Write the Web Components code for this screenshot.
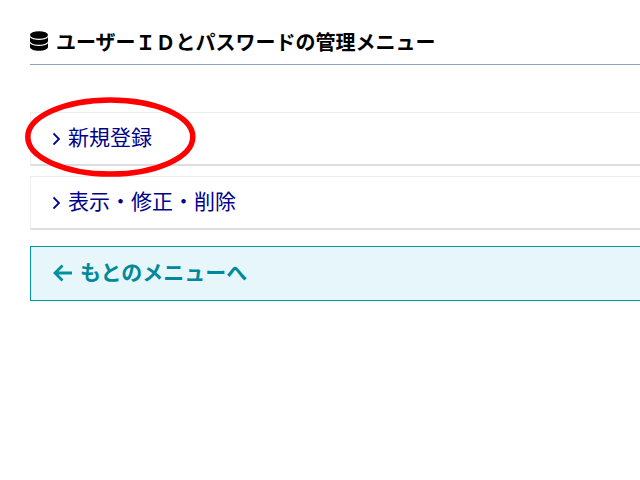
<!DOCTYPE html>
<html lang="ja">
<head>
<meta charset="utf-8">
<title>管理メニュー</title>
<style>
  html, body { margin: 0; background: #fff; overflow: hidden; }
  body { width: 640px; height: 480px; font-family: "Noto Sans CJK JP", "Liberation Sans", sans-serif; }
</style>
</head>
<body>
<admin-page>
  <page-title>ユーザーＩＤとパスワードの管理メニュー</page-title>
  <menu-link>新規登録</menu-link>
  <menu-link>表示・修正・削除</menu-link>
  <back-link>もとのメニューへ</back-link>
</admin-page>
<script>
class AdminPage extends HTMLElement {
  constructor() {
    super();
    this.attachShadow({mode: 'open'}).innerHTML = `
      <style>
        :host { display: block; position: relative; height: 480px; overflow: hidden; }
        .wrap { display: flex; flex-direction: column; padding: 26px 0 0 30px; width: 660px; }
        svg { position: absolute; left: 0; top: 0; }
      </style>
      <div class="wrap"><slot></slot></div>
      <svg width="640" height="480" viewBox="0 0 640 480">
        <ellipse cx="110.300" cy="137" rx="82.500" ry="37" fill="none" stroke="#f00" stroke-width="5.500"/>
      </svg>`;
  }
}
class PageTitle extends HTMLElement {
  constructor() {
    super();
    this.attachShadow({mode: 'open'}).innerHTML = `
      <style>
        :host { display: flex; align-items: center; gap: 8px; height: 30px; margin-bottom: 47px; margin-right: 20px;
          padding-bottom: 8px; border-bottom: 1px solid #8fa3bf; font-size: 20px; font-weight: 700; color: #000; line-height: 30px; }
        svg { width: 18px; height: 20px; flex: none; }
        span { margin-top: 1px; }
      </style>
      <svg viewBox="0 0 18 20">
        <ellipse cx="9" cy="4" rx="9" ry="3.800"/>
        <path d="M0 6.300C1.500 8.100 5 9 9 9s7.500-.9 9-2.700V10c0 2.100-4 3.800-9 3.800S0 12.100 0 10z"/>
        <path d="M0 12.300C1.500 14.100 5 15 9 15s7.500-.9 9-2.700V16c0 2.100-4 3.800-9 3.800S0 18.100 0 16z"/>
      </svg>
      <span><slot></slot></span>`;
  }
}
class MenuLink extends HTMLElement {
  constructor() {
    super();
    this.attachShadow({mode: 'open'}).innerHTML = `
      <style>
        :host { display: flex; align-items: center; gap: 8px; box-sizing: border-box; height: 54px; margin-bottom: 10px;
          padding-left: 22px; border: 1px solid #eee; border-bottom: 2px solid #ddd; border-right: 0;
          font-size: 21px; color: #00008b; background: #fff; }
        svg { width: 7px; height: 14px; flex: none; margin-top: 1px; }
        span { margin-top: -5px; }
      </style>
      <svg viewBox="0 0 7 14"><path d="M.5 1.500l5.500 5.500-5.500 5.500" fill="none" stroke="#00008b" stroke-width="1.800"/></svg>
      <span><slot></slot></span>`;
  }
}
class BackLink extends HTMLElement {
  constructor() {
    super();
    this.attachShadow({mode: 'open'}).innerHTML = `
      <style>
        :host { display: flex; align-items: center; gap: 8px; box-sizing: border-box; height: 55px; margin-top: 6px;
          padding-left: 22px; border: 1px solid #0097a7; border-right: 0;
          font-size: 21px; font-weight: 700; color: #00899a; background: #e6f6fa; }
        svg { width: 19px; height: 18px; flex: none; margin-top: -1px; }
        span { margin-top: -6px; }
      </style>
      <svg viewBox="0 0 19 18"><path d="M19 9H2M9.500 1.500L2 9l7.500 7.500" fill="none" stroke="#00919f" stroke-width="2.800"/></svg>
      <span><slot></slot></span>`;
  }
}
customElements.define('admin-page', AdminPage);
customElements.define('page-title', PageTitle);
customElements.define('menu-link', MenuLink);
customElements.define('back-link', BackLink);
</script>
</body>
</html>
